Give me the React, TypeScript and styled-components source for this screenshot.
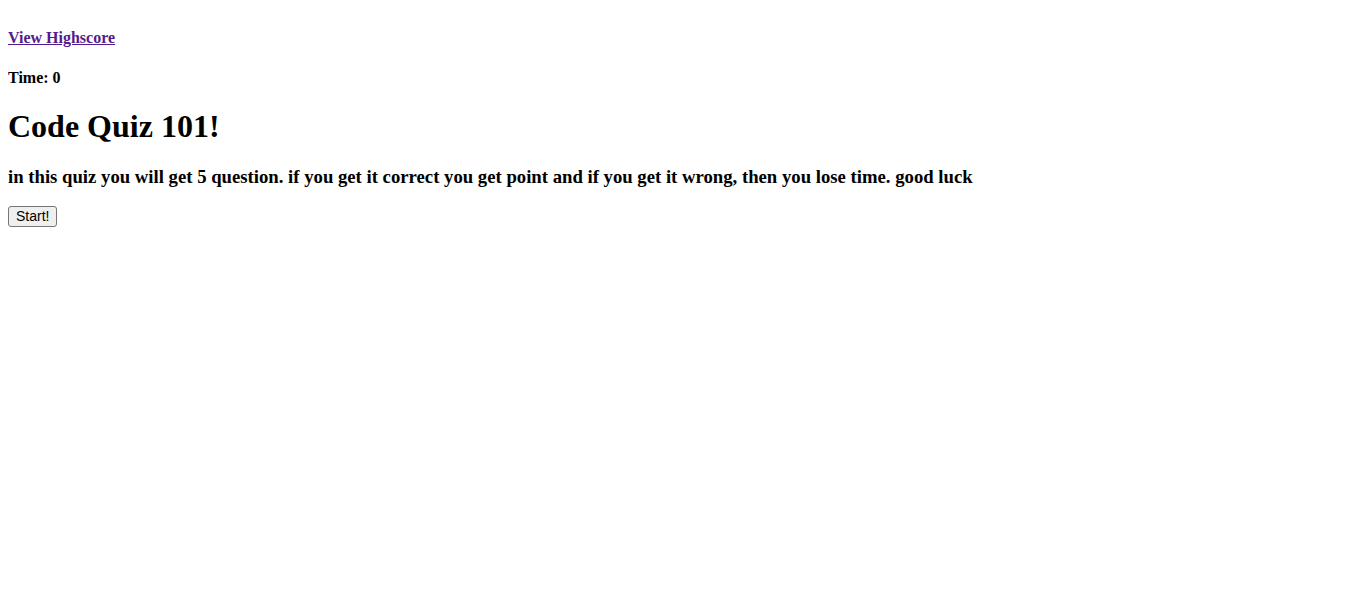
import React from "react";
import styled, { createGlobalStyle } from "styled-components";

const Global = createGlobalStyle`
  html, body { background: #fff; }
  body {
    margin: 8px;
    font-family: "Liberation Serif", "Times New Roman", serif;
    color: #000;
  }
`;

const Header = styled.header`
  display: block;
`;

const SmallHeading = styled.h4`
  font-size: 16px;
  font-weight: bold;
  margin: 21.28px 0;
`;

const HighscoreLink = styled.a`
  color: #551a8b;
  text-decoration: underline;
  cursor: pointer;
`;

const Title = styled.h1`
  font-size: 32px;
  font-weight: bold;
  margin: 21.44px 0;
`;

const Intro = styled.h3`
  font-size: 18.72px;
  font-weight: bold;
  margin: 18.72px 0;
`;

const StartButton = styled.button`
  font-family: "Liberation Sans", Arial, sans-serif;
  font-size: 14px;
  line-height: 17px;
  color: #000;
  background: #efefef;
  border: 1px solid #767676;
  border-radius: 3px;
  padding: 1px 7px;
  margin-top: -1px;
  cursor: pointer;
`;

export default function App() {
  return (
    <>
      <Global />
      <Header>
        <SmallHeading>
          <HighscoreLink href="#">View Highscore</HighscoreLink>
        </SmallHeading>
        <SmallHeading>Time: 0</SmallHeading>
      </Header>
      <main>
        <Title>Code Quiz 101!</Title>
        <Intro>
          in this quiz you will get 5 question. if you get it correct you get point and if you get it wrong, then you lose time. good luck
        </Intro>
        <StartButton>Start!</StartButton>
      </main>
    </>
  );
}
